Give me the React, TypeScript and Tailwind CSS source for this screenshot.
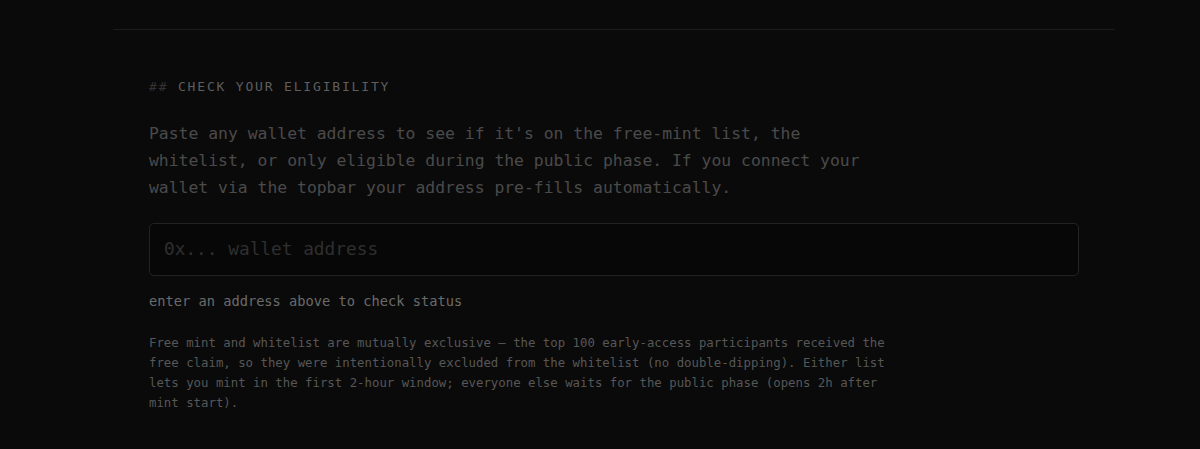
import React from "react";

const mono = { fontFamily: '"DejaVu Sans Mono", "Liberation Mono", monospace' };

export default function App() {
  return (
    <div className="min-h-[449px] w-full bg-[#0a0a0a]" style={mono}>
      <div className="ml-[113px] w-[1002px]">
        <div className="h-[30px] border-b border-[#1c1c1c]" />
        <div className="px-[36px] pt-[48px]">
          <h2 className="text-[13px] leading-[18px] tracking-[0.14em] text-[#5e5e5e]">
            <span className="text-[#333333]">##</span> CHECK YOUR ELIGIBILITY
          </h2>
          <p className="mt-[24px] w-[730px] text-[16.4px] leading-[27px] text-[#4a4a4a]">
            Paste any wallet address to see if it's on the free-mint list, the whitelist, or only eligible during the public phase. If you connect your wallet via the topbar your address pre-fills automatically.
          </p>
          <div className="mt-[22px] flex h-[53px] items-center rounded-[5px] border border-[#222222] bg-[#070707] px-[14px]">
            <input
              className="w-full bg-transparent text-[17.8px] text-[#bbbbbb] outline-none placeholder:text-[#2f2f2f]"
              style={mono}
              placeholder="0x... wallet address"
            />
          </div>
          <div className="mt-[15px] text-[13.7px] leading-[20px] text-[#6a6a6a]">
            enter an address above to check status
          </div>
          <p className="mt-[22px] w-[745px] text-[12.35px] leading-[20px] text-[#575757]">
            Free mint and whitelist are mutually exclusive — the top 100 early-access participants received the free claim, so they were intentionally excluded from the whitelist (no double-dipping). Either list lets you mint in the first 2-hour window; everyone else waits for the public phase (opens 2h after mint start).
          </p>
        </div>
      </div>
    </div>
  );
}
